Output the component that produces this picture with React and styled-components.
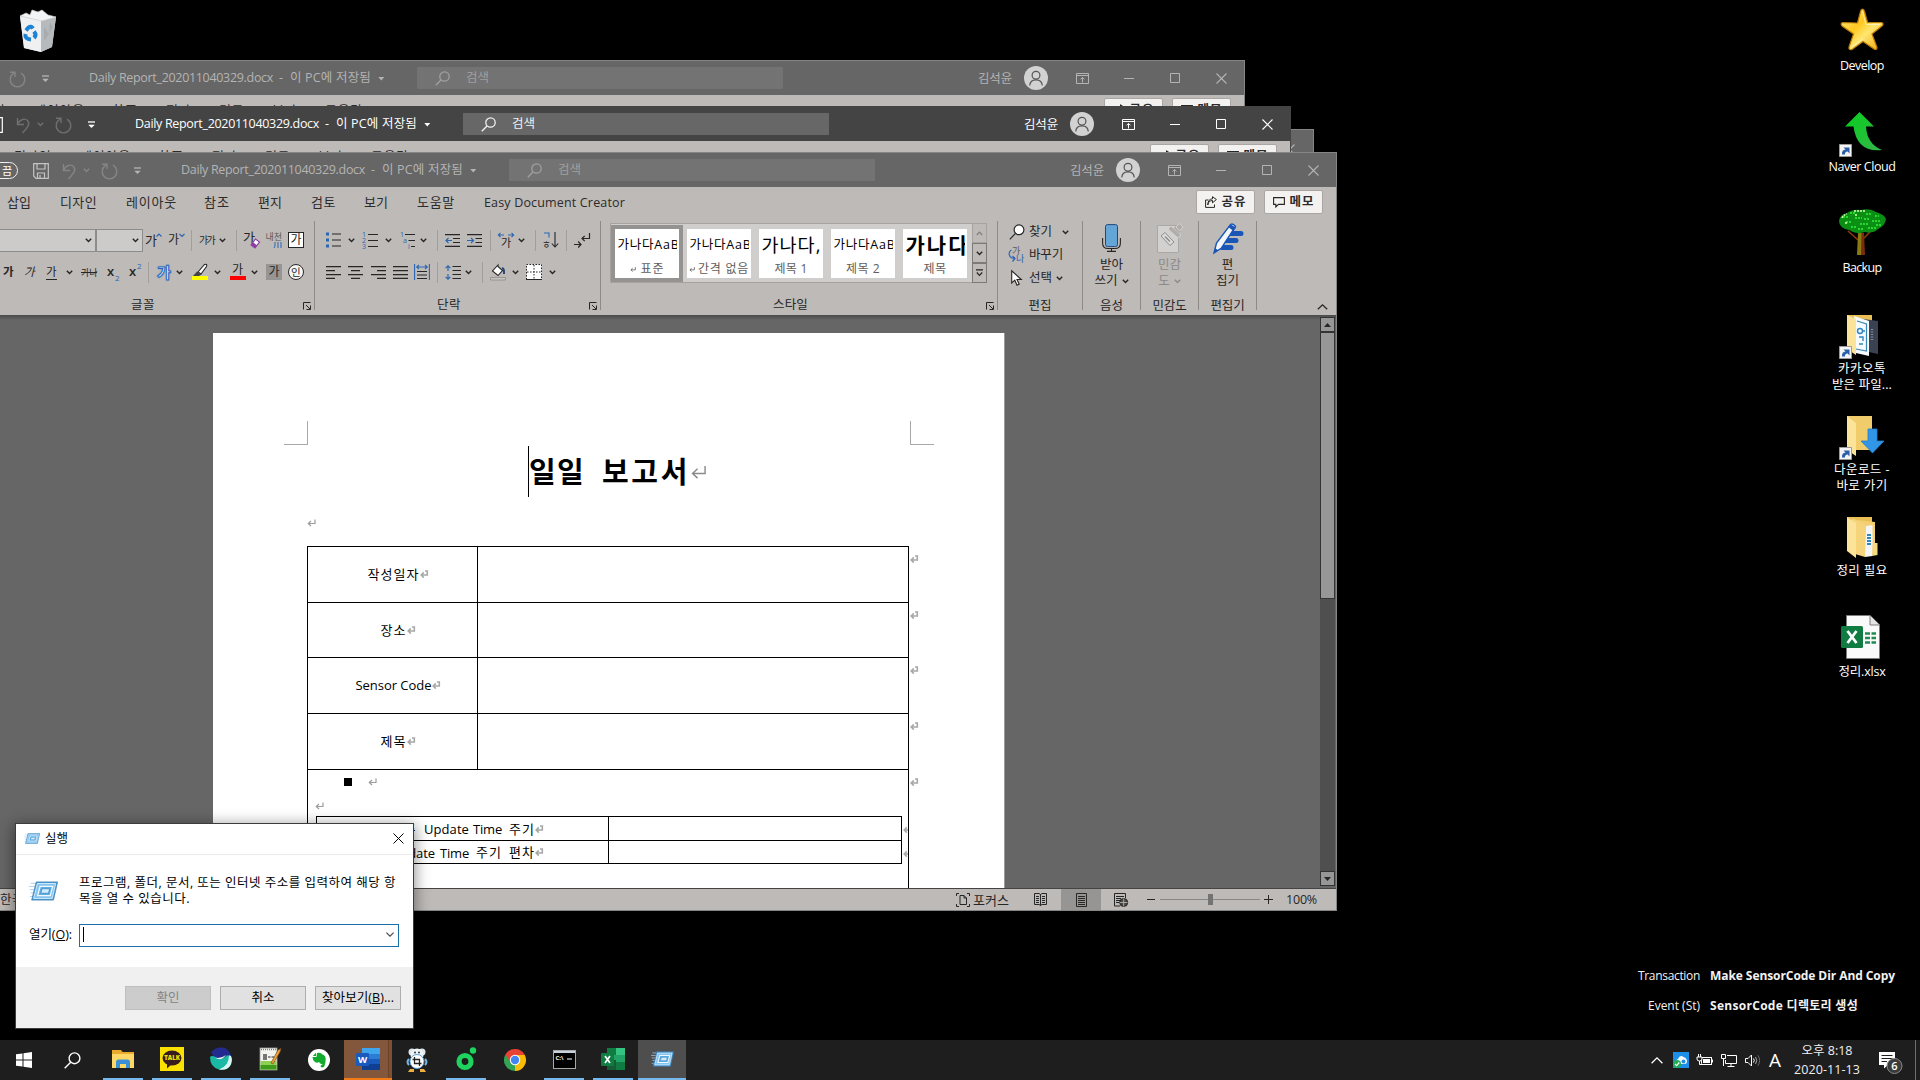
import React, { useLayoutEffect, useRef, useState } from "react";
import styled, { createGlobalStyle, css } from "styled-components";

const Global = createGlobalStyle`
  html, body { margin: 0; padding: 0; background: #000; overflow: hidden; }
  * { box-sizing: border-box; }
  svg { display: block; overflow: visible; flex: none; }
`;

const Desktop = styled.main`
  position: relative;
  width: 1920px;
  height: 1080px;
  overflow: hidden;
  background: #000;
  font-family: "Open Sans", "Noto Sans CJK KR", sans-serif;
  font-size: 12px;
  color: #262626;
`;

/* ---------- text and row helpers ---------- */

const TextBox = styled.span`
  display: block;
  flex: none;
  width: ${(p) => p.$w}px;
  font-size: ${(p) => p.$s || 12}px;
  line-height: ${(p) => p.$lh || 16}px;
  height: ${(p) => p.$lh || 16}px;
  font-weight: ${(p) => p.$b || 400};
  font-style: ${(p) => (p.$i ? "italic" : "normal")};
  color: ${(p) => p.$c || "inherit"};
  white-space: pre;
`;

/* A line of text whose tracking is tuned so that it spans `w` pixels. */
function T({ w, s, b, c, i, lh, children }) {
  const ref = useRef(null);
  const [sp, setSp] = useState(0);
  useLayoutEffect(() => {
    const el = ref.current;
    const n = el.textContent.length;
    const natural = el.getBoundingClientRect().width - sp * n;
    setSp((w - natural) / n);
  }, [w, s]);
  return (
    <TextBox $w={w} $s={s} $b={b} $c={c} $i={i} $lh={lh}>
      <span ref={ref} style={{ letterSpacing: sp }}>{children}</span>
    </TextBox>
  );
}

const StripRow = styled.div`
  display: flex;
  align-items: center;
  flex: none;
  height: ${(p) => p.$h}px;
  margin-top: ${(p) => p.$mt || 0}px;
`;
const Slot = styled.div`
  flex: none;
  display: flex;
  align-items: center;
  width: ${(p) => p.$w}px;
  margin-left: ${(p) => p.$g}px;
  padding-top: ${(p) => p.$pt || 0}px;
`;

/* Items are [start, end, node, topPadding]; gaps follow from neighbouring edges. */
function Strip({ from = 0, h, mt, items }) {
  let x = from;
  return (
    <StripRow $h={h} $mt={mt}>
      {items.map(([a, b, node, pt], k) => {
        const g = a - x;
        x = b;
        return <Slot key={k} $g={g} $w={b - a} $pt={pt}>{node}</Slot>;
      })}
    </StripRow>
  );
}

const Svg = ({ w, h, children, vb, ...r }) => (
  <svg width={w} height={h} viewBox={vb || `0 0 ${w} ${h}`} fill="none" {...r}>{children}</svg>
);
const Chev = ({ c = "#262626" }) => (
  <Svg w={7} h={5}><path d="M.8 .8L3.5 3.6L6.2 .8" stroke={c} strokeWidth="1.4" /></Svg>
);
const Ret = ({ w = 9, h = 8, c = "#9c9c9c" }) => (
  <Svg w={w} h={h} vb="0 0 9 8"><path d="M8 .5V4.5H1.5M4 2L1.3 4.5L4 7" stroke={c} strokeWidth={w > 12 ? 0.75 : 1.2} /></Svg>
);
const CellMark = () => (
  <Svg w={8} h={8}><path d="M5 1H7.3V5H2M3.8 2.4L1.2 5L3.8 7.6" stroke="#a8a8a8" strokeWidth="1.6" /></Svg>
);

/* ---------- Word windows ---------- */

const Win = styled.section`
  position: absolute;
  left: ${(p) => p.$x}px;
  top: ${(p) => p.$y}px;
  width: 1437px;
  height: ${(p) => (p.$front ? 759 : 200)}px;
  display: flex;
  flex-direction: column;
  overflow: hidden;
  background: #bebab7;
  border: 1px solid ${(p) => (p.$active ? "#444" : "#858585")};
  border-left: 0;
`;
const TitleBar = styled.header`
  flex: none;
  height: 34px;
  background: ${(p) => (p.$active ? "#444444" : "#666666")};
  color: ${(p) => (p.$active ? "#fff" : "#b4b4b4")};
`;
const AutoPill = styled.div`
  width: 46px;
  height: 17px;
  border: 1.5px solid #f0f0f0;
  border-radius: 9px;
  display: flex;
  align-items: center;
  justify-content: flex-end;
  padding-right: 4px;
  color: #fff;
`;
const SearchBox = styled.div`
  width: 366px;
  height: 22px;
  background: ${(p) => (p.$active ? "#676767" : "#737373")};
`;
const Avatar = styled.div`
  width: 24px;
  height: 24px;
  border-radius: 50%;
  background: #d2d2d2;
  display: flex;
  justify-content: center;
  align-items: center;
`;

function TitleRow({ active }) {
  const fg = active ? "#ffffff" : "#b4b4b4";
  const dim = active ? "#6f6f6f" : "#858585";
  const ph = active ? "#f2f2f2" : "#a0a0a0";
  return (
    <TitleBar $active={active}>
      <Strip
        h={34}
        from={-100}
        items={[
          [-28, 18, <AutoPill><T w={11} s={11} lh={13}>끔</T></AutoPill>],
          [33, 49, <Svg w={16} h={16}><path d="M.7 .7H15.3V15.3H3L.7 13ZM4 .7V6H12V.7M4.5 15V10H11.5V15M7 12V15" stroke={active ? "#fff" : "#c4c4c4"} strokeWidth="1.2" /></Svg>, 2],
          [62, 77, <Svg w={15} h={17}><path d="M1.5 1V7.5H8M1.5 7.3C4 2 9 1 11.5 3.5C14 6.5 13 9 6.5 16" stroke={dim} strokeWidth="1.4" /></Svg>, 3],
          [83, 90, <Chev c={dim} />],
          [101, 118, <Svg w={17} h={17}><path d="M5 2.2A7.3 7.3 0 1 0 12 2.2M1 1.2H6V6" stroke={dim} strokeWidth="1.4" /></Svg>, 3],
          [134, 141, <Svg w={7} h={8}><path d="M0 1H7" stroke={fg} strokeWidth="1.3" /><path d="M.8 4L3.5 6.7L6.2 4Z" fill={fg} stroke={fg} strokeWidth=".6" /></Svg>, 2],
          [181, 365, <T w={184} s={12.5}>Daily Report_202011040329.docx</T>],
          [371, 376, <T w={5} s={12.5}>-</T>],
          [382, 463, <T w={81} s={12.5}>이 PC에 저장됨</T>],
          [470, 477, <Svg w={7} h={4}><path d="M.3 0H6.3L3.3 3.6Z" fill={fg} /></Svg>, 1],
          [509, 875, (
            <SearchBox $active={active}>
              <Strip h={22} items={[
                [18, 33, <Svg w={15} h={15}><circle cx="9.5" cy="5.5" r="4.7" stroke={ph} strokeWidth="1.3" /><path d="M6 9L.8 14.3" stroke={ph} strokeWidth="1.3" /></Svg>],
                [49, 72, <T w={23} s={12.5} c={ph}>검색</T>],
              ]} />
            </SearchBox>
          )],
          [1070, 1104, <T w={34} s={12.5}>김석윤</T>, 1],
          [1116, 1140, <Avatar><Svg w={16} h={18}><circle cx="8" cy="6.2" r="3.9" stroke="#555" strokeWidth="1.2" /><path d="M1.7 16.5C2 12.5 4 10.8 8 10.8S14 12.5 14.3 16.5" stroke="#555" strokeWidth="1.2" /></Svg></Avatar>],
          [1168, 1181, <Svg w={13} h={11}><path d="M.5 .5H12.5V10.5H.5ZM.5 2.5H12.5M6.5 9.5V4.6M4.5 6.4L6.5 4.4L8.5 6.4" stroke={fg} /></Svg>],
          [1216, 1226, <Svg w={10} h={1}><path d="M0 .5H10" stroke={fg} /></Svg>],
          [1262, 1272, <Svg w={10} h={10}><path d="M.5 .5H9.5V9.5H.5Z" stroke={fg} /></Svg>],
          [1308, 1319, <Svg w={11} h={11}><path d="M.5 .5L10.5 10.5M10.5 .5L.5 10.5" stroke={fg} strokeWidth="1.1" /></Svg>],
        ]}
      />
    </TitleBar>
  );
}

const TabBar = styled.nav`
  flex: none;
  height: 34px;
  display: flex;
  color: #2b2b2b;
`;
const TabBtn = styled.div`
  width: 59px;
  height: 24px;
  background: #f3f2f1;
  border: 1px solid #a9a6a3;
  border-radius: 2px;
  display: flex;
  align-items: center;
  justify-content: center;
  gap: 5px;
`;

function Tabs() {
  return (
    <TabBar>
      <Strip
        from={-100}
        h={29}
        items={[
          [7, 31, <T w={24} s={13}>삽입</T>],
          [60, 97, <T w={37} s={13}>디자인</T>],
          [126, 177, <T w={51} s={13}>레이아웃</T>],
          [204, 230, <T w={26} s={13}>참조</T>],
          [258, 282, <T w={24} s={13}>편지</T>],
          [311, 336, <T w={25} s={13}>검토</T>],
          [364, 388, <T w={24} s={13}>보기</T>],
          [417, 455, <T w={38} s={13}>도움말</T>],
          [484, 625, <T w={141} s={12.5}>Easy Document Creator</T>, 3],
          [1196, 1255, <TabBtn><Svg w={12} h={12}><path d="M3.5 4H.6V11.4H9.5V8.5M2.8 9C3 6 5 4.5 7.5 4.5V6.8L11.4 3.5L7.5 .7V2.8C4.5 3 2.8 5 2.8 9Z" stroke="#262626" /></Svg><T w={25} s={12.5} b={700}>공유</T></TabBtn>, 1],
          [1264, 1323, <TabBtn><Svg w={12} h={11}><path d="M.6 .6H11.4V7.4H5.5L2.8 10V7.4H.6Z" stroke="#262626" strokeWidth="1.1" /></Svg><T w={25} s={12.5} b={700}>메모</T></TabBtn>, 1],
        ]}
      />
    </TabBar>
  );
}

/* ---------- ribbon ---------- */

const RibbonBar = styled.div`
  flex: none;
  display: flex;
  height: 94px;
  color: #262626;
`;
const Group = styled.div`
  flex: none;
  display: flex;
  flex-direction: column;
  width: ${(p) => p.$w}px;
  height: 89px;
  border-right: 1px solid #8d8a88;
`;
const Sep = styled.i`
  display: block;
  width: 1px;
  height: 21px;
  background: #a19e9b;
`;
const Combo = styled.div`
  width: ${(p) => p.$w}px;
  height: 23px;
  border: 1px solid #8e8c8a;
  background: #cdcbc9;
  display: flex;
  align-items: center;
  justify-content: flex-end;
  padding-right: 3px;
`;
const GlyphBox = styled.div`
  width: 16px;
  height: 16px;
  display: flex;
  align-items: center;
  justify-content: center;
  ${(p) => p.$kind === "box" && css`background: #fff; border: 1px solid #262626;`}
  ${(p) => p.$kind === "shade" && css`background: #979593;`}
  ${(p) => p.$kind === "circle" && css`background: #f6f6f6; border: 1px solid #262626; border-radius: 50%;`}
`;
const Deco = styled.div`
  display: flex;
  ${(p) => p.$k === "u" && css`border-bottom: 1px solid #262626;`}
  ${(p) => p.$k === "glow" && css`color: #fff; -webkit-text-stroke: 1px #2467bd; text-shadow: 0 0 2px #2467bd;`}
`;
const Stack = styled.div`
  display: flex;
  flex-direction: column;
  align-items: center;
  width: 100%;
`;
const ColorBar = styled.i`
  display: block;
  width: 16px;
  height: 4px;
  background: ${(p) => p.$c};
`;
const B = "#2a66b1";
const Lines = ({ d }) => <Svg w={15} h={13}><path d={d} stroke="#262626" strokeWidth="1.1" /></Svg>;
const Launch = () => <Svg w={8} h={8}><path d="M7.5 .5H.5V7.5M3 3L7 7M7.5 3.5V7.5H3.5" stroke="#262626" /></Svg>;
const GrowA = ({ up }) => (
  <StripRow $h={16}>
    <T w={11} s={up ? 13 : 12}>가</T>
    <Svg w={6} h={14}><path d={up ? "M.5 3.5L3 1L5.5 3.5" : "M.5 1L3 3.5L5.5 1"} stroke={B} strokeWidth="1.2" /></Svg>
  </StripRow>
);

function FontGroup() {
  return (
    <Group $w={415}>
      <Strip from={-100} h={30} mt={4} items={[
        [-100, 96, <Combo $w={196}><Chev /></Combo>],
        [96, 143, <Combo $w={47}><Chev /></Combo>],
        [145, 162, <GrowA up />],
        [168, 185, <GrowA />],
        [191, 192, <Sep />],
        [199, 214, <T w={15} s={10}>가가</T>],
        [219, 226, <Chev />],
        [236, 237, <Sep />],
        [244, 260, <Svg w={16} h={18}><text x="-1" y="11" fontSize="13" fill="#262626">가</text><path d="M7 14L11.5 8L15.5 11L11 17Z" fill="#fff" stroke="#8e3ba5" strokeWidth="1.2" /><path d="M7 14L9 11.3L13 14.2L11 17Z" fill="#8e3ba5" /></Svg>],
        [266, 282, <Svg w={16} h={18}><text x="-.5" y="9" fontSize="9" fill="#5c5a58">내천</text><path d="M9 11V14Q9 16 8 17M12 11V17M15 11V17" stroke={B} /></Svg>],
        [288, 304, <GlyphBox $kind="box"><T w={11} s={12} lh={14}>가</T></GlyphBox>],
      ]} />
      <Strip from={-100} h={30} mt={2} items={[
        [3, 14, <T w={10} s={11.5} b={700}>가</T>],
        [24, 35, <T w={11} s={11.5} i>가</T>],
        [46, 57, <Deco $k="u"><T w={11} s={11.5} lh={15}>가</T></Deco>],
        [66, 73, <Chev />],
        [81, 97, <Svg w={16} h={14}><text x="0" y="11" fontSize="9" fill="#262626">가나</text><path d="M0 7.5H16" stroke="#262626" /></Svg>],
        [107, 119, <Svg w={12} h={16}><text x="0" y="12" fontSize="13" fontWeight="600" fill="#262626">x</text><text x="8" y="17" fontSize="8" fill={B}>2</text></Svg>],
        [129, 141, <Svg w={12} h={16}><text x="0" y="12" fontSize="13" fontWeight="600" fill="#262626">x</text><text x="8" y="5" fontSize="8" fill={B}>2</text></Svg>],
        [148, 149, <Sep />],
        [157, 173, <Deco $k="glow"><T w={15} s={15} b={700}>가</T></Deco>],
        [176, 183, <Chev />],
        [192, 208, <Stack><Svg w={16} h={12}><path d="M6 8L12.5 .5Q15.5 -.5 14.5 2.5L9 10Z" fill="#fff" stroke="#262626" strokeWidth="1.1" /><path d="M1 12L5 7.5L9.5 10.5L7 12Z" fill="#444" /></Svg><ColorBar $c="#ffff00" /></Stack>],
        [214, 221, <Chev />],
        [229, 246, <Stack><T w={11} s={12} lh={12}>가</T><ColorBar $c="#ff0000" /></Stack>],
        [251, 258, <Chev />],
        [266, 282, <GlyphBox $kind="shade"><T w={11} s={12} lh={14}>가</T></GlyphBox>],
        [288, 304, <GlyphBox $kind="circle"><T w={10} s={10.5} lh={13}>인</T></GlyphBox>],
      ]} />
      <Strip from={-100} h={16} mt={10} items={[
        [131, 155, <T w={24} s={12.5}>글꼴</T>],
        [303, 311, <Launch />, 1],
      ]} />
    </Group>
  );
}

function ParaGroup() {
  return (
    <Group $w={286}>
      <Strip from={315} h={30} mt={4} items={[
        [326, 341, <Svg w={15} h={16}><path d="M0 2H3M0 8H3M0 14H3" stroke={B} strokeWidth="3" /><path d="M6 2H15M6 8H15M6 14H15" stroke="#262626" strokeWidth="1.1" /></Svg>],
        [348, 355, <Chev />],
        [362, 378, <Svg w={16} h={17}><text x="0" y="5" fontSize="7" fill={B}>1</text><text x="0" y="11" fontSize="7" fill={B}>2</text><text x="0" y="17" fontSize="7" fill={B}>3</text><path d="M6 2.5H16M6 8.5H16M6 14.5H16" stroke="#262626" strokeWidth="1.1" /></Svg>],
        [385, 392, <Chev />],
        [400, 415, <Svg w={15} h={17}><text x="0" y="5" fontSize="7" fill={B}>1</text><text x="3" y="11" fontSize="7" fill={B}>a</text><text x="8" y="17" fontSize="7" fill={B}>i</text><path d="M5 2.5H15M8.5 8.5H15M11 14.5H15" stroke="#262626" strokeWidth="1.1" /></Svg>],
        [420, 427, <Chev />],
        [437, 438, <Sep />],
        [445, 460, <Svg w={15} h={13}><path d="M0 .6H15M8 4.5H15M8 8.5H15M0 12.4H15" stroke="#262626" strokeWidth="1.1" /><path d="M7 6.5H1M3.5 4L1 6.5L3.500 9" stroke={B} strokeWidth="1.2" /></Svg>],
        [467, 482, <Svg w={15} h={13}><path d="M0 .6H15M8.5 4.5H15M8.5 8.5H15M0 12.4H15" stroke="#262626" strokeWidth="1.1" /><path d="M0 6.5H6.5M4 4L6.5 6.5L4 9" stroke={B} strokeWidth="1.2" /></Svg>],
        [490, 491, <Sep />],
        [498, 515, <Svg w={17} h={16}><path d="M0 3H6M2.5 .8L.3 3L2.5 5.2M10 3H16M13.5 .8L15.7 3L13.5 5.2" stroke={B} strokeWidth="1.1" /><text x="3" y="15" fontSize="11" fill="#262626">가</text></Svg>],
        [518, 525, <Chev />],
        [535, 536, <Sep />],
        [542, 559, <Svg w={17} h={16}><path d="M2 1H7V5.5" stroke={B} strokeWidth="1.1" /><text x="0" y="15.5" fontSize="9.5" fill="#262626">ㅎ</text><path d="M13 0V15M9.8 11.5L13 15L16.2 11.5" stroke="#262626" strokeWidth="1.1" /></Svg>],
        [566, 567, <Sep />],
        [574, 590, <Svg w={16} h={15}><path d="M15.5 0V5.5H8M10.7 2.8L8 5.5L10.7 8.2M0 11.5H7M4.2 8.5L7 11.5L4.2 14.5" stroke="#262626" strokeWidth="1.2" /></Svg>],
      ]} />
      <Strip from={315} h={30} mt={2} items={[
        [326, 341, <Lines d="M0 .6H15M0 4.6H9M0 8.6H15M0 12.4H9" />],
        [348, 363, <Lines d="M0 .6H15M3 4.6H12M0 8.6H15M3 12.4H12" />],
        [371, 386, <Lines d="M0 .6H15M6 4.6H15M0 8.6H15M6 12.4H15" />],
        [393, 408, <Lines d="M0 .6H15M0 4.6H15M0 8.6H15M0 12.4H15" />],
        [414, 430, <Svg w={16} h={16}><path d="M.6 0V16M15.4 0V16M2.5 3H13.5M5 1L2.7 3L5 5M11 1L13.3 3L11 5" stroke={B} strokeWidth="1.1" /><path d="M3 7.5H13M3 11H13M3 14.5H13" stroke="#262626" strokeWidth="1.1" /></Svg>],
        [437, 438, <Sep />],
        [445, 461, <Svg w={16} h={15}><path d="M3 1V6M3 9V14M.6 3.2L3 .8L5.4 3.2M.6 11.8L3 14.2L5.4 11.8" stroke={B} strokeWidth="1.2" /><path d="M7.5 1.5H16M7.5 5.5H16M7.5 9.5H16M7.5 13.5H16" stroke="#262626" strokeWidth="1.1" /></Svg>],
        [465, 472, <Chev />],
        [482, 483, <Sep />],
        [490, 506, <Svg w={16} h={16}><path d="M8 1L2.5 7L8 11.5L12.5 6.5L8 2.5Z" fill="#fff" stroke="#262626" strokeWidth="1.1" /><path d="M12 4Q14.5 4.5 14 10" stroke="#24477a" strokeWidth="2" /><path d="M.5 13.5H15.5V16H.5Z" fill="#c8c6c4" stroke="#8d8a88" strokeWidth=".8" /></Svg>],
        [512, 519, <Chev />],
        [526, 542, <Svg w={16} h={16}><path d="M.5 .5H15.5V15.5H.5Z" fill="#fff" stroke="#262626" strokeDasharray="1.5 1.5" /><path d="M8 1V15M1 8H15" stroke="#262626" strokeDasharray="1.5 1.5" /><path d="M0 15.5H16" stroke="#262626" /></Svg>],
        [549, 556, <Chev />],
      ]} />
      <Strip from={315} h={16} mt={10} items={[
        [437, 461, <T w={24} s={12.5}>단락</T>],
        [589, 597, <Launch />, 1],
      ]} />
    </Group>
  );
}

const Gallery = styled.div`
  display: flex;
  flex: none;
  width: 377px;
  height: 60px;
  margin: 2px 0 0 9px;
  border: 1px solid #a5a2a0;
  background: #d0cecc;
`;
const Card = styled.div`
  flex: none;
  width: 72px;
  height: 57px;
  margin-top: 1px;
  border: 4px solid ${(p) => (p.$on ? "#959391" : "transparent")};
`;
const CardFace = styled.div`
  height: 49px;
  width: 64px;
  background: #fff;
  overflow: hidden;
  display: flex;
  flex-direction: column;
  align-items: center;
  padding-top: 3px;
`;
const CardSample = styled.div`
  height: 26px;
  width: 59px;
  overflow: hidden;
  display: flex;
  align-items: center;
  color: #000;
`;
const ScrollCol = styled.div`
  width: 15px;
  margin: -1px -1px -1px auto;
  display: flex;
  flex-direction: column;
`;
const ScrollBtn = styled.div`
  flex: 1;
  border: 1px solid ${(p) => (p.$off ? "#a5a2a0" : "#7d7b79")};
  background: #bebab7;
  display: flex;
  align-items: center;
  justify-content: center;
`;

const styleCards = [
  { s: <T w={62} s={12.5}>가나다AaB</T>, l: <T w={24} s={12}>표준</T>, m: true },
  { s: <T w={62} s={12.5}>가나다AaB</T>, l: <T w={51} s={12}>간격 없음</T>, m: true },
  { s: <T w={60} s={18.5} lh={24}>가나다,</T>, l: <T w={33} s={12}>제목 1</T> },
  { s: <T w={62} s={12.5}>가나다AaB</T>, l: <T w={34} s={12}>제목 2</T> },
  { s: <T w={64} s={21} b={700} lh={26}>가나다</T>, l: <T w={23} s={12}>제목</T> },
];
const CardLabel = styled.div`
  display: flex;
  align-items: center;
  gap: ${(p) => (p.$tight ? 3 : 5)}px;
  height: 18px;
  color: #605e5c;
  margin-top: 2px;
`;

function StyleGroup() {
  return (
    <Group $w={397}>
      <Gallery>
        {styleCards.map((c, k) => (
          <Card key={k} $on={k === 0}>
            <CardFace>
              <CardSample>{c.s}</CardSample>
              <CardLabel $tight={k === 1}>{c.m && <Ret w={6} h={7} c="#605e5c" />}{c.l}</CardLabel>
            </CardFace>
          </Card>
        ))}
        <ScrollCol>
          <ScrollBtn $off><Svg w={7} h={5}><path d="M.8 4L3.5 1.2L6.2 4" stroke="#807e7c" strokeWidth="1.2" /></Svg></ScrollBtn>
          <ScrollBtn><Chev /></ScrollBtn>
          <ScrollBtn><Svg w={7} h={8}><path d="M0 .8H7M.8 3.5L3.5 6.3L6.2 3.5" stroke="#262626" strokeWidth="1.2" /></Svg></ScrollBtn>
        </ScrollCol>
      </Gallery>
      <Strip from={601} h={16} mt={14} items={[
        [773, 808, <T w={35} s={12.5}>스타일</T>],
        [986, 994, <Launch />, 1],
      ]} />
    </Group>
  );
}

const BigIcon = styled.div`
  height: 34px;
  display: flex;
  align-items: center;
  justify-content: center;
`;
const BigText = styled.div`
  display: flex;
  justify-content: center;
  align-items: center;
  gap: 4px;
  height: 16px;
  margin-top: ${(p) => p.$mt || 0}px;
`;
const BigWrap = styled.div`
  display: flex;
  flex-direction: column;
  color: ${(p) => (p.$off ? "#8c8987" : "#262626")};
`;
const GroupName = styled.div`
  display: flex;
  justify-content: center;
  margin-top: ${(p) => p.$mt}px;
  color: #262626;
`;

function BigGroup({ w, icon, a, b, drop, off, name, nw }) {
  return (
    <Group $w={w}>
      <BigWrap $off={off}>
        <BigIcon>{icon}</BigIcon>
        <BigText $mt={2}><T w={a.length * 11.5} s={12.5}>{a}</T></BigText>
        <BigText><T w={b.length * 11.5} s={12.5}>{b}</T>{drop && <Chev c={off ? "#8c8987" : "#262626"} />}</BigText>
      </BigWrap>
      <GroupName $mt={9}><T w={nw} s={12.5}>{name}</T></GroupName>
    </Group>
  );
}

function Ribbon() {
  return (
    <RibbonBar>
      <FontGroup />
      <ParaGroup />
      <StyleGroup />
      <Group $w={85}>
        <Strip from={998} h={22} items={[
          [1009, 1025, <Svg w={16} h={16}><circle cx="10" cy="5.8" r="4.9" fill="#fff" stroke="#262626" strokeWidth="1.2" /><path d="M6.5 9.3L.8 15.3" stroke="#262626" strokeWidth="1.2" /></Svg>],
          [1029, 1052, <T w={23} s={12.5}>찾기</T>],
          [1062, 1069, <Chev />],
        ]} />
        <Strip from={998} h={24} items={[
          [1008, 1024, <Svg w={16} h={16}><text x="4" y="7" fontSize="9" fill="#5c5a58">가</text><text x="8" y="15" fontSize="9" fill={B}>나</text><path d="M3.5 3C0 5 0 11 7 11.5M4.5 9L7 11.5L4.5 14.5" stroke={B} strokeWidth="1.2" /></Svg>],
          [1029, 1063, <T w={34} s={12.5}>바꾸기</T>],
        ]} />
        <Strip from={998} h={22} items={[
          [1011, 1022, <Svg w={11} h={16}><path d="M.7 .8V13L3.8 10.2L6 15.2L8.2 14.2L6 9.5H10.3Z" fill="#fff" stroke="#262626" strokeWidth="1.1" /></Svg>],
          [1029, 1052, <T w={23} s={12.5}>선택</T>],
          [1056, 1063, <Chev />],
        ]} />
        <GroupName $mt={9}><T w={23} s={12.5}>편집</T></GroupName>
      </Group>
      <BigGroup w={58} name="음성" nw={23} a="받아" b="쓰기" drop icon={
        <Svg w={19} h={28}><rect x="3.5" y=".6" width="12" height="22" rx="2" fill="#64a5d8" stroke="#24477a" /><path d="M.6 14V19Q.6 24.5 6 24.5H13Q18.4 24.5 18.4 19V14M9.5 24.5V27.4M5 27.4H14" stroke="#262626" strokeWidth="1.1" /></Svg>
      } />
      <BigGroup w={58} off name="민감도" nw={34} a="민감" b="도" drop icon={
        <Svg w={26} h={30}><path d="M.5 2.5H21.5V29.5H.5Z" fill="#d3d1cf" stroke="#aaa8a6" /><path d="M4 13L8 9.500L17 19L13 22.500Z" fill="#dddbd9" stroke="#8f8d8b" /><path d="M8 13.500L13 18.500" stroke="#8f8d8b" strokeWidth="1.5" /><path d="M11 6L14 3L24 12L21 15Z" fill="#b0adab" stroke="#d3d1cf" /><path d="M16.500 5L19.500 2L24.500 7L21.500 10Z" fill="#b0adab" /><path d="M19 4L22.500 .5L26 4L22.500 8Z" fill="#b0adab" stroke="#d3d1cf" /></Svg>
      } />
      <BigGroup w={58} name="편집기" nw={34} a="편" b="집기" icon={
        <Svg w={30} h={31}><path d="M15 10.5H28M12 17.5H23M9 24.5H18" stroke="#1a56b8" strokeWidth="5" strokeLinecap="round" /><path d="M1 30L3.5 20L17.5 1.5Q20 0 22.5 3.5L8.5 25Z" fill="#f2f6fb" stroke="#1a56b8" strokeWidth="1.4" /><path d="M17.5 1.2L23 4.8L20.5 8L15.5 4.3Z" fill="#1a56b8" /><path d="M1 30L2 25L5.5 27.5Z" fill="#1a56b8" /></Svg>
      } />
      <Strip from={1257} h={16} mt={78} items={[
        [1317, 1328, <Svg w={11} h={6}><path d="M.8 5.3L5.5 .8L10.2 5.3" stroke="#262626" strokeWidth="1.3" /></Svg>],
      ]} />
    </RibbonBar>
  );
}

/* ---------- document ---------- */

const Canvas = styled.div`
  flex: none;
  height: 574px;
  padding-left: 313px;
  display: flex;
  background: linear-gradient(#4a4a4a, #666 5px);
  overflow: hidden;
  border-bottom: 1px solid #444;
`;
const Page = styled.article`
  flex: none;
  width: 792px;
  height: 900px;
  margin-top: 18px;
  background: #fff;
  border-right: 1px solid #9a9a9a;
  color: #000;
`;
const Corner = styled.i`
  display: block;
  width: 24px;
  height: 24px;
  border-bottom: 1px solid #a8a8a8;
  ${(p) => (p.$r ? "border-left: 1px solid #a8a8a8;" : "border-right: 1px solid #a8a8a8;")}
`;
const Caret = styled.i`
  display: block;
  width: 1px;
  height: ${(p) => p.$h}px;
  background: #000;
`;
const DocRow = styled.div`
  display: flex;
  height: ${(p) => p.$h}px;
  margin-left: 94px;
`;
const LabelCell = styled.div`
  width: 170px;
  border: 1px solid #000;
  border-width: 1px 0 0 1px;
  display: flex;
  align-items: center;
  justify-content: center;
  padding: 0 0 1px 10px;
`;
const ValueCell = styled.div`
  width: 432px;
  border: 1px solid #000;
  border-width: 1px 1px 0 1px;
`;
const EndMark = styled.div`
  padding: 9px 0 0 1px;
`;
const BodyCell = styled.div`
  width: 602px;
  height: 200px;
  border: 1px solid #000;
  padding-left: 8px;
`;
const InnerRow = styled.div`
  display: flex;
  height: ${(p) => p.$h}px;
  width: 592px;
  overflow: hidden;
`;
const InnerCell = styled.div`
  flex: none;
  width: ${(p) => p.$w}px;
  border: 1px solid #000;
  border-width: 1px ${(p) => (p.$last ? 1 : 0)}px ${(p) => (p.$bottom ? 1 : 0)}px 1px;
  display: flex;
  align-items: center;
  padding-left: 74px;
`;
const Square = styled.i`
  display: block;
  width: 8px;
  height: 8px;
  background: #000;
`;
const VScroll = styled.div`
  flex: none;
  width: 15px;
  height: 569px;
  margin: 2px 0 0 315px;
  background: #4f4f4f;
  display: flex;
  flex-direction: column;
`;
const VPart = styled.div`
  flex: none;
  height: ${(p) => p.$h}px;
  margin-top: ${(p) => p.$mt || 0}px;
  border: 1px solid #333;
  background: #979797;
  display: flex;
  align-items: center;
  justify-content: center;
`;

const rows = [["작성일자", 52, 56], ["장소", 26, 55], ["Sensor Code", 76, 56], ["제목", 26, 56]];

function Doc() {
  return (
    <Canvas>
      <Page>
        <Strip from={213} h={24} mt={88} items={[[284, 308, <Corner />], [910, 934, <Corner $r />]]} />
        <Strip from={213} h={52} mt={0} items={[
          [528, 529, <Caret $h={51} />],
          [529, 585, <T w={56} s={29} b={700} lh={40}>일일</T>, 1],
          [602, 690, <T w={88} s={29} b={700} lh={40}>보고서</T>, 1],
          [690, 708, <Ret w={17} h={15} c="#8a8a8a" />, 2],
        ]} />
        <Strip from={213} h={16} mt={18} items={[[307, 316, <Ret />]]} />
        <StripRow $h={15} />
        {rows.map(([label, w, h]) => (
          <DocRow key={label} $h={h}>
            <LabelCell><T w={w} s={13}>{label}</T><CellMark /></LabelCell>
            <ValueCell />
            <EndMark><CellMark /></EndMark>
          </DocRow>
        ))}
        <DocRow $h={200}>
          <BodyCell>
            <Strip from={316} h={24} items={[[344, 352, <Square />], [368, 377, <Ret />]]} />
            <Strip from={316} h={22} items={[[315, 324, <Ret />, 1]]} />
            <InnerRow $h={24}>
              <InnerCell $w={292}>
                <Strip from={391} h={16} items={[[391, 416, <T w={25} s={13}>기준</T>], [424, 469, <T w={45} s={13}>Update</T>], [473, 502, <T w={29} s={13}>Time</T>], [509, 535, <T w={26} s={13}>주기</T>], [535, 543, <CellMark />]]} />
              </InnerCell>
              <InnerCell $w={294} $last />
              <EndMark><CellMark /></EndMark>
            </InnerRow>
            <InnerRow $h={24}>
              <InnerCell $w={292} $bottom>
                <Strip from={391} h={16} items={[[391, 435, <T w={44} s={13}>Update</T>, 1], [440, 469, <T w={29} s={13}>Time</T>, 1], [476, 502, <T w={26} s={13}>주기</T>], [509, 535, <T w={26} s={13}>편차</T>], [535, 543, <CellMark />]]} />
              </InnerCell>
              <InnerCell $w={294} $last $bottom />
              <EndMark><CellMark /></EndMark>
            </InnerRow>
          </BodyCell>
          <EndMark><CellMark /></EndMark>
        </DocRow>
      </Page>
      <VScroll>
        <VPart $h={15}><Svg w={7} h={4}><path d="M0 4L3.5 0L7 4Z" fill="#262626" /></Svg></VPart>
        <VPart $h={267} />
        <VPart $h={15} $mt={272}><Svg w={7} h={4}><path d="M0 0L3.5 4L7 0Z" fill="#262626" /></Svg></VPart>
      </VScroll>
    </Canvas>
  );
}

const StatusBar = styled.footer`
  flex: 1;
  display: flex;
  color: #262626;
`;
const ViewBtn = styled.div`
  width: 40px;
  height: 22px;
  background: #979593;
  display: flex;
  align-items: center;
  justify-content: center;
`;
const Thumb = styled.i`
  display: block;
  width: 5px;
  height: 11px;
  background: #757371;
`;
const Rail = styled.i`
  display: block;
  width: 100%;
  height: 1px;
  background: #8a8886;
`;

function Status() {
  return (
    <StatusBar>
      <Strip from={-100} h={21} items={[
        [0, 35, <T w={35} s={12.5}>한국어</T>],
        [956, 970, <Svg w={14} h={14}><path d="M3 .5H.5V3M11 .5H13.5V3M.5 11V13.5H3M13.5 11V13.5H11M4 2.5H8L10.5 5V11.5H4ZM8 2.5V5H10.5" stroke="#262626" /></Svg>],
        [973, 1009, <T w={36} s={13}>포커스</T>],
        [1034, 1047, <Svg w={13} h={13}><path d="M6.5 1.5L5 .5H.5V11.5H5L6.5 12.5L8 11.5H12.5V.5H8ZM6.5 1.5V12.5M2 3.5H5M2 5.5H5M2 7.5H5M2 9.5H5M8 3.5H11M8 5.5H11M8 7.5H11M8 9.5H11" stroke="#262626" /></Svg>],
        [1061, 1101, <ViewBtn><Svg w={11} h={14}><path d="M.5 .5H10.5V13.5H.5ZM2 3.5H9M2 5.5H9M2 7.5H9M2 9.5H9M2 11.5H9" stroke="#262626" /></Svg></ViewBtn>],
        [1114, 1128, <Svg w={14} h={14}><path d="M6 13H.5V.5H11.5V5M2 3.5H10M2 5.5H7M2 7.5H6M2 9.5H5" stroke="#262626" /><circle cx="9.7" cy="9.5" r="4" fill="#4a4846" stroke="#262626" /><path d="M6 9.5H13.5M9.7 5.5V13.5" stroke="#bebab7" strokeWidth=".8" /></Svg>],
        [1147, 1155, <Svg w={8} h={1}><path d="M0 .5H8" stroke="#262626" /></Svg>],
        [1160, 1208, <Rail />],
        [1208, 1213, <Thumb />],
        [1213, 1260, <Rail />],
        [1264, 1273, <Svg w={9} h={9}><path d="M0 4.5H9M4.500 0V9" stroke="#262626" /></Svg>],
        [1286, 1317, <T w={31} s={12.5}>100%</T>],
      ]} />
    </StatusBar>
  );
}

function WordWindow({ x, y, active, front }) {
  return (
    <Win $x={x} $y={y} $active={active} $front={front}>
      <TitleRow active={active} />
      <Tabs />
      {front && <Ribbon />}
      {front && <Doc />}
      {front && <Status />}
    </Win>
  );
}

/* Only a corner of this window's caption shows between its neighbours. */
const Sliver = styled(Win)`
  align-items: flex-end;
  background: #666;
  padding: 14px 18px 0 0;
`;

/* ---------- Run dialog ---------- */

const Dialog = styled.section`
  position: absolute;
  left: 15px;
  top: 823px;
  width: 399px;
  height: 206px;
  display: flex;
  flex-direction: column;
  background: #fff;
  border: 1px solid #3c3c3c;
  color: #000;
  box-shadow: 0 3px 14px 1px rgba(0, 0, 0, 0.45);
`;
const DlgTitle = styled.header`
  height: 31px;
  border-bottom: 1px solid #ececec;
`;
const DlgFoot = styled.footer`
  margin-top: auto;
  height: 61px;
  background: #f0f0f0;
  padding: 19px 12px 0 0;
  display: flex;
  justify-content: flex-end;
  gap: 9px;
`;
const DlgBtn = styled.button`
  width: 86px;
  height: 24px;
  padding: 0;
  display: flex;
  align-items: center;
  justify-content: center;
  font-family: inherit;
  background: ${(p) => (p.disabled ? "#cccccc" : "#e1e1e1")};
  border: 1px solid ${(p) => (p.disabled ? "#bfbfbf" : "#adadad")};
  color: ${(p) => (p.disabled ? "#838383" : "#000")};
`;
const Field = styled.div`
  width: 320px;
  height: 23px;
  border: 1px solid #1a6fa8;
  display: flex;
  align-items: center;
  justify-content: space-between;
  padding: 0 4px 2px 3px;
`;
const U = styled.u`
  text-underline-offset: 1px;
`;
const Lead = styled.div`
  display: flex;
  flex-direction: column;
`;

const RunIcon = ({ w, h }) => (
  <Svg w={w} h={h} vb="0 0 32 22">
    <path d="M2 2.500H9M0 6H8M1 9.500H7M2 13H6M1 17H5" stroke="#a9d0ee" strokeWidth="1" />
    <path d="M8 1H31.500L27 21H3Z" fill="#4b9bd6" stroke="#3b7fb5" strokeWidth=".8" />
    <path d="M9.300 2.800H29.300L25.600 19.200H5.200Z" fill="#86c3ee" stroke="#d8effd" strokeWidth="1" />
    <path d="M12.300 6H26L23.500 16H9.500Z" fill="#5fafe4" stroke="#eef8ff" strokeWidth="1.400" />
    <path d="M14.500 8.500H22.800L21.500 13.500H13Z" fill="#d2ebfb" stroke="#3f8cc6" strokeWidth=".9" />
  </Svg>
);

function RunDialog() {
  return (
    <Dialog>
      <DlgTitle>
        <Strip from={16} h={28} items={[
          [24, 40, <RunIcon w={16} h={11} />],
          [45, 68, <T w={23} s={12.5}>실행</T>, 2],
          [393, 404, <Svg w={11} h={11}><path d="M.5 .5L10.5 10.5M10.5 .5L.5 10.5" stroke="#000" /></Svg>],
        ]} />
      </DlgTitle>
      <Strip from={16} h={34} mt={18} items={[
        [28, 60, <RunIcon w={31} h={20} />, 2],
        [79, 396, (
          <Lead>
            <T w={317} s={12.5}>프로그램, 폴더, 문서, 또는 인터넷 주소를 입력하여 해당 항</T>
            <T w={111} s={12.5}>목을 열 수 있습니다.</T>
          </Lead>
        ), 1],
      ]} />
      <Strip from={16} h={24} mt={16} items={[
        [29, 72, <T w={43} s={12.5}>열기(<U>O</U>):</T>],
        [79, 399, <Field><Caret $h={15} /><Svg w={8} h={5}><path d="M.4 .6L4 4.2L7.6 .6" stroke="#444" strokeWidth="1.1" /></Svg></Field>],
      ]} />
      <DlgFoot>
        <DlgBtn disabled><T w={23} s={12.5}>확인</T></DlgBtn>
        <DlgBtn><T w={23} s={12.5}>취소</T></DlgBtn>
        <DlgBtn><T w={72} s={12.5}>찾아보기(<U>B</U>)...</T></DlgBtn>
      </DlgFoot>
    </Dialog>
  );
}

/* ---------- desktop shortcuts ---------- */

const IconColumn = styled.div`
  position: absolute;
  left: 1812px;
  top: 7px;
  width: 100px;
  display: flex;
  flex-direction: column;
  color: #fff;
`;
const Shortcut = styled.div`
  height: 101px;
  display: flex;
  flex-direction: column;
  align-items: center;
`;
const Pic = styled.div`
  height: 51px;
  padding-right: 1px;
`;
const BinSpot = styled.div`
  position: absolute;
  left: 14px;
  top: 7px;
`;

const Link = () => (
  <g><path d="M1.5 36.5H13.5V48.5H1.5Z" fill="#f4f4f4" stroke="#9a9a9a" /><path d="M4 46.5Q3.5 42 7.5 41.5L5.5 39.5H11.5V45.5L9.7 43.6Q6.5 44 7 46.5Z" fill="#2b5fa8" /></g>
);

const shortcuts = [
  [[["Develop", 44]], (
    <g>
      <defs><linearGradient id="gold" x1="0" y1="0" x2="1" y2="1"><stop offset="0" stopColor="#fff0a0" /><stop offset=".4" stopColor="#ffc81e" /><stop offset=".6" stopColor="#ffe670" /><stop offset="1" stopColor="#f0a400" /></linearGradient></defs>
      <path d="M24.500 2Q26 2 26.500 4.500L29.500 15.500L43.500 15.500Q46.500 16.500 44 19L34 27L39 40.500Q39 43.500 36 42L25 34.500L14 42.500Q10.500 43.500 11 40L15.500 27L4 19Q2 16.500 4.500 15.500L19.500 16L22.500 4.500Q23 2 24.500 2Z" fill="url(#gold)" stroke="#b97a08" strokeWidth="1.2" />
      <path d="M24.500 4.500L28 17.500L42 17.500M25 32L13.500 40" stroke="#fff6c8" strokeWidth="1" opacity=".8" />
    </g>
  )],
  [[["Naver Cloud", 67]], (
    <g>
      <defs><linearGradient id="gr" x1="0" y1="0" x2="1" y2="1"><stop offset="0" stopColor="#06d01c" /><stop offset="1" stopColor="#35b54a" /></linearGradient></defs>
      <path d="M21.500 4L36 18.500H28Q29 36 44 42Q19 45 15.500 18.500H7Z" fill="url(#gr)" />
      <Link />
    </g>
  )],
  [[["Backup", 39]], (
    <g>
      <path d="M10 22L20 31M32 23L24 31" stroke="#8b3a12" strokeWidth="1.6" />
      <path d="M20 24H25V46H19Z" fill="#8a7a10" /><path d="M23.500 24H26L27 46H23Z" fill="#7a2c10" />
      <path d="M1 12Q2 5 9 4Q15 0 23 1Q32 -1 38 3Q47 6 48 10Q47 17 40 20Q35 25 27 23Q18 26 11 21Q1 19 1 12Z" fill="#0a8f14" />
      <path d="M5 8H10M12 4H18M8 13H14M17 9H24M28 5H34M22 15H30M34 12H42M13 18H19M30 19H38M26 10H31M37 7H41M20 20H25M38 16H43" stroke="#27d831" strokeWidth="2" strokeDasharray="2 1" />
      <path d="M4 9Q5 6 9 5M16 2H27M7 14H9M17 6H19" stroke="#d6ffb0" strokeWidth="1.3" strokeDasharray="2 1" />
    </g>
  )],
  [[["카카오톡", 48], ["받은 파일...", 60]], (
    <g>
      <path d="M9 5H34V40H9Z" fill="#e9bf56" /><path d="M18 8L40 11V44L31 42Z" fill="#3a4252" /><path d="M16 6L31 11V46L18 43Z" fill="#f5fafd" /><path d="M19 11L28.500 14V41L18 39" stroke="#3b86b5" strokeWidth="1.200" /><circle cx="22" cy="21" r="2.500" stroke="#2f87bf" strokeWidth="1.400" /><path d="M24.500 21H27M21 27H25V31M21 34H25" stroke="#2f87bf" strokeWidth="1.400" /><path d="M34 19V31" stroke="#818996" strokeDasharray="1 1.500" strokeWidth="2.500" /><path d="M9 5L18 9V45L9 39Z" fill="#fbe39a" />
      <Link />
    </g>
  )],
  [[["다운로드 -", 56], ["바로 가기", 51]], (
    <g><path d="M9 5H34V39H9Z" fill="#f0cc6a" /><path d="M9 5L18 12V45L9 39Z" fill="#fbe39a" /><path d="M30 18H39V30H46L34.500 42L23 30H30Z" fill="#3296e6" stroke="#1f7fcc" strokeWidth=".8" /><Link /></g>
  )],
  [[["정리 필요", 51]], (
    <g><path d="M9 5H34V38H9Z" fill="#e9bf56" /><path d="M20 8L37 10V41L26 44Z" fill="#f3cf70" /><path d="M28 14L34.500 13V44L27 45Z" fill="#f3f5f7" /><path d="M31 22V33" stroke="#2f87bf" strokeWidth="4" strokeDasharray="2 1" /><path d="M35 31H39.500V43L34 44Z" fill="#f6da80" /><path d="M14 6L27 12V45L17 42Z" fill="#f5d47c" /><path d="M9 5L18 11V46L9 39Z" fill="#fbe39a" /></g>
  )],
  [[["정리.xlsx", 47]], (
    <g><path d="M8.500 2.500H32L41.500 12V45.500H8.500Z" fill="#fafafa" stroke="#7d7d7d" /><path d="M32 2.500V12H41.500" fill="#e4e4e4" stroke="#7d7d7d" /><path d="M27 20.500H32M33.500 20.500H38M27 25H32M33.500 25H38M27 29.500H32M33.500 29.500H38" stroke="#1f8a52" strokeWidth="2.400" /><rect x="3" y="13" width="22" height="22" rx="1.500" fill="#107c41" /><path d="M9.500 18L18.500 30M18.500 18L9.500 30" stroke="#fff" strokeWidth="2.800" /></g>
  )],
];

const Bin = () => (
  <Svg w={48} h={48}>
    <path d="M6 9L42 10L38 40L27 45L10 41Z" fill="#d9dcde" /><path d="M27 13L42 10L38 40L27 45Z" fill="#b6babd" /><path d="M6 9L27 13L27 45L10 41Z" fill="#eef0f1" />
    <path d="M6 9L12 6L16 8L18 3L24 5L28 3L34 8L42 10L28 14Z" fill="#f3f4f5" stroke="#c8cbcd" strokeWidth=".7" />
    <path d="M30 20L35 27L30 34ZM36 15L39 20L35 27Z" fill="#9fa4a8" opacity=".6" />
    <path d="M12 23.500L14.500 20.500Q17 18.500 19 21.500" stroke="#1c84d4" strokeWidth="4" /><path d="M20 24.500Q23 28 20 31" stroke="#1c84d4" strokeWidth="4" /><path d="M17 32.500Q10.500 32 11.500 27" stroke="#1c84d4" strokeWidth="4" />
  </Svg>
);

/* ---------- monitor caption ---------- */

const Caption = styled.div`
  position: absolute;
  left: 1637px;
  top: 967px;
  color: #f2f2f2;
`;

/* ---------- taskbar ---------- */

const Taskbar = styled.footer`
  position: absolute;
  left: 0;
  top: 1040px;
  width: 1920px;
  height: 40px;
  display: flex;
  background: #1e1e1e;
  color: #f0f0f0;
`;
const TaskApp = styled.div`
  flex: none;
  width: 48px;
  height: 40px;
  margin-left: ${(p) => p.$g}px;
  display: flex;
  flex-direction: column;
  align-items: center;
  justify-content: space-between;
  background: ${(p) => p.$bg || "transparent"};
`;
const AppPic = styled.div`
  flex: 1;
  display: flex;
  align-items: center;
`;
const Under = styled.i`
  display: block;
  width: ${(p) => p.$w}px;
  height: 2px;
  background: ${(p) => p.$c || "#76b9ed"};
`;

const apps = [
  [0, <Svg w={16} h={16}><path d="M0 2.300L6.500 1.400V7.500H0ZM7.500 1.200L16 0V7.500H7.500ZM0 8.500H6.500V14.600L0 13.700ZM7.500 8.500H16V16L7.500 14.800Z" fill="#fff" /></Svg>],
  [0, <Svg w={17} h={17}><circle cx="10.500" cy="6.300" r="5.400" stroke="#fff" strokeWidth="1.400" /><path d="M6.700 10.300L.7 16.300" stroke="#fff" strokeWidth="1.400" /></Svg>],
  [40, <Svg w={22} h={18}><path d="M0 0H9L10.500 2H22V18H0Z" fill="#e8a92d" /><path d="M0 4H22V18H0Z" fill="#ffd766" /><path d="M4 18V12Q4 9.500 6.500 9.500H15.500Q18 9.500 18 12V18H14V14H8V18Z" fill="#3b8fd4" /></Svg>],
  [40, <Svg w={24} h={24}><rect width="24" height="24" fill="#fae100" /><ellipse cx="12" cy="11" rx="9.500" ry="7.500" fill="#371d1e" /><path d="M7 16L7 21.500L12 17Z" fill="#371d1e" /><text x="12" y="13.400" fontSize="6" fontWeight="800" textAnchor="middle" fill="#fae100">TALK</text></Svg>],
  [40, <Svg w={24} h={24}><path d="M2 5Q9 -1.500 17 1.500Q21 4 22 9L6 12Z" fill="#232c8e" /><path d="M1 10Q3 8 7 10.500Q11 14 16 10Q18 7 22 9Q24 14 21 19Q17 24 10 22.500Q1 20 1 10Z" fill="#19b9a6" /><path d="M10 22.500Q20 19 20 8.500L22 9Q24 14 21 19Q17 24 10 22.500Z" fill="#d8f5f2" /><path d="M6 10.500Q12 12 17 8Q12 15 6 10.500Z" fill="#f4fbfb" /></Svg>],
  [40, <Svg w={24} h={24}><rect x="2" y="1" width="17" height="22" fill="#f4f4ee" stroke="#9a9a9a" strokeWidth=".8" /><path d="M3 2.500H18" stroke="#7d7d7d" strokeDasharray="1 1" strokeWidth="1.500" /><path d="M2.500 14H18.500V22.500H2.500Z" fill="#8ed152" /><path d="M2.500 18H18.500V22.500H2.500Z" fill="#3f9a1d" /><path d="M6 7V13M8 7V13M10 10H12.500M13.500 10H16" stroke="#222" strokeWidth="1.200" /><path d="M13 16L20 3L23 1.500L22 5L15 17Z" fill="#e9a63a" stroke="#7d4a14" strokeWidth=".7" /></Svg>],
  [0, <Svg w={22} h={22}><circle cx="11" cy="11" r="11" fill="#fff" /><path d="M9 4Q13 3 14.500 5.500Q17.500 6 17.700 10Q17.700 14 16.300 17.500Q14 19.500 12.500 17.500Q12.500 15.500 15 15.800Q11.500 14.500 11 13Q9 14.500 7 13Q4.500 11 4.500 8H8.500Z" fill="#13ab2d" /><path d="M4.800 7L8 3.800V7Z" fill="#13ab2d" /></Svg>],
  [48, <Svg w={24} h={22}><rect x="6" width="18" height="22" rx="1.500" fill="#2b7cd3" /><path d="M6 0H24V6H6Z" fill="#41a5ee" /><path d="M6 11H24V16H6Z" fill="#185abd" /><path d="M6 16H24V22H6Z" fill="#103f91" /><rect y="5" width="13" height="13" rx="1.200" fill="#185abd" /><text x="6.500" y="15" fontSize="9.500" fontWeight="700" textAnchor="middle" fill="#fff">W</text></Svg>],
  [0, <Svg w={20} h={24}><circle cx="5" cy="4" r="3.500" fill="#dfe7ee" /><circle cx="15" cy="4" r="3.500" fill="#dfe7ee" /><circle cx="10" cy="7" r="6.500" fill="#eef3f7" /><circle cx="8" cy="4.500" r=".9" fill="#222" /><circle cx="12" cy="4.500" r=".9" fill="#222" /><path d="M2 17Q-1 14 2 11M18 17Q21 14 18 11" stroke="#7ab6e0" strokeWidth="2" /><circle cx="10" cy="13.500" r="7" fill="#fff" stroke="#5d9fd3" strokeWidth="1" /><path d="M7.500 9V15.500H14.500M5.500 11.500H12.500V18" stroke="#222" strokeWidth="1.300" /><path d="M3 21H7V24H1ZM13 21H17L19 24H13Z" fill="#f0b040" /></Svg>],
  [40, <Svg w={22} h={24}><circle cx="10" cy="14.500" r="6" stroke="#1ed45f" strokeWidth="5.200" /><circle cx="18" cy="3.500" r="3.200" fill="#1ed45f" /></Svg>],
  [0, <Svg w={22} h={22}><path d="M11 11L1.470 5.500A11 11 0 0 1 20.530 5.500Z" fill="#e94335" /><path d="M11 11L20.530 5.500A11 11 0 0 1 11 22Z" fill="#fbbc05" /><path d="M11 11L11 22A11 11 0 0 1 1.470 5.500Z" fill="#34a353" /><path d="M11 6H20.800L16 12L11 22L15.500 13.500Z" fill="#fbbc05" /><path d="M1.470 5.500L6.500 13.500L11 11L11 6Z" fill="#e94335" /><circle cx="11" cy="11" r="5.200" fill="#fff" /><circle cx="11" cy="11" r="4.200" fill="#4285f4" /></Svg>],
  [40, <Svg w={23} h={19}><rect x=".5" y=".5" width="22" height="18" fill="#000" stroke="#a8a8a8" /><path d="M1 1H22V3H1Z" fill="#c9d3dd" /><text x="2.500" y="10" fontSize="6" fontWeight="700" fill="#fff">C:\</text><path d="M14 9H19" stroke="#fff" /></Svg>],
  [40, <Svg w={24} h={22}><rect x="6" width="18" height="22" rx="1.500" fill="#21a366" /><path d="M6 0H15V7H6Z" fill="#107c41" /><path d="M15 0H24V7H15Z" fill="#33c481" /><path d="M6 12H15V22H6Z" fill="#185c37" /><path d="M15 14H24V22H15Z" fill="#107c41" /><rect y="5" width="13" height="13" rx="1.200" fill="#107c41" /><path d="M4 8L9 15M9 8L4 15" stroke="#fff" strokeWidth="1.700" /></Svg>],
  [48, <RunIcon w={23} h={16} />],
];

function TaskApps() {
  return apps.map(([w, pic], k) => {
    const word = k === 7;
    const run = k === apps.length - 1;
    const gap = k < 2 ? 0 : k === 2 ? 3 : 1;
    const bg = word ? "linear-gradient(90deg, #82573b 44px, #6d4027 44px, #6d4027 45px, #7c5036 45px)" : run ? "#4e4e4e" : undefined;
    return (
      <TaskApp key={k} $g={gap} $bg={bg}>
        <AppPic>{pic}</AppPic>
        {w ? <Under $w={w} $c={word ? "#f37a14" : undefined} /> : null}
      </TaskApp>
    );
  });
}

const Clock = styled.div`
  display: flex;
  flex-direction: column;
  align-items: center;
  width: 100%;
  gap: 2px;
`;
const DesktopEdge = styled.i`
  display: block;
  width: 1px;
  height: 40px;
  background: #6f6f6f;
`;

function Tray() {
  return (
    <Strip from={686} h={40} items={[
      [1651, 1663, <Svg w={12} h={7}><path d="M.6 6.200L6 .9L11.400 6.200" stroke="#fff" strokeWidth="1.300" /></Svg>],
      [1673, 1689, <Svg w={16} h={16}><rect width="16" height="16" fill="#1e8fe8" /><path d="M4 11Q2 8 5 7Q7 2 10.500 5Q14 6 14 9.500Q14 12 11 12H5Z" fill="#fff" /><circle cx="10.500" cy="9.500" r="2" fill="#1e8fe8" /><circle cx="4" cy="12" r="4" fill="#1fae57" /><path d="M2 12L3.600 13.600L6.300 10.500" stroke="#fff" strokeWidth="1.200" /></Svg>],
      [1697, 1713, <Svg w={16} h={12}><rect x="4.500" y="3.500" width="10" height="7" stroke="#fff" /><path d="M6 5H13V9H6Z" fill="#fff" /><path d="M15.500 5.500V8.500" stroke="#fff" /><path d="M0 3H5V5Q5 7 2.500 7Q0 7 0 5ZM1.500 0V3M3.500 0V3M2.500 7V10.500H5" fill="#1e1e1e" stroke="#fff" /></Svg>],
      [1721, 1737, <Svg w={16} h={13}><path d="M6 1.500H15.500V9.500H4.500V6M10 9.500V12.500M6.500 12.500H13.500M.5 .5H4.500V4.500H.5ZM2.500 4.500V12" stroke="#fff" /></Svg>],
      [1745, 1761, <Svg w={16} h={13}><path d="M.5 4.500H3L6.500 1V12L3 8.500H.5Z" stroke="#fff" /><path d="M8.500 4.500Q10 6.500 8.500 8.500" stroke="#fff" /><path d="M10.500 3Q13 6.500 10.500 10" stroke="#aaa" /><path d="M12.800 1.200Q16.500 6.500 12.800 11.800" stroke="#666" /></Svg>],
      [1769, 1783, <T w={13} s={19} lh={24} c="#fff">A</T>],
      [1793, 1861, <Clock><T w={51} s={12.5} lh={17}>오후 8:18</T><T w={66} s={12.5} lh={17}>2020-11-13</T></Clock>],
      [1879, 1904, <Svg w={25} h={24}><path d="M0 2H16V15H9L5 18.500V15H0Z" fill="#fff" /><path d="M2.500 5.500H13.500M2.500 8.500H13.500M2.500 11.500H8" stroke="#1e1e1e" /><circle cx="15.500" cy="16" r="7.500" fill="#3a3a3a" stroke="#8a8a8a" /><text x="15.500" y="20" fontSize="11" fontWeight="600" textAnchor="middle" fill="#fff">6</text></Svg>, 4],
      [1915, 1916, <DesktopEdge />],
    ]} />
  );
}

export default function App() {
  return (
    <Desktop>
      <Global />
      <BinSpot><Bin /></BinSpot>
      <IconColumn>
        {shortcuts.map(([labels, art], k) => (
          <Shortcut key={k}>
            <Pic><Svg w={48} h={48}>{art}</Svg></Pic>
            {labels.map(([t, w]) => <T key={t} w={w} s={12.5}>{t}</T>)}
          </Shortcut>
        ))}
      </IconColumn>
      <Caption>
        <Strip from={1637} h={18} items={[
          [1638, 1700, <T w={62}>Transaction</T>],
          [1710, 1895, <T w={185} b={700}>Make SensorCode Dir And Copy</T>],
        ]} />
        <Strip from={1637} h={18} mt={12} items={[
          [1648, 1700, <T w={52}>Event (St)</T>],
          [1710, 1858, <T w={148} b={700}>SensorCode 디렉토리 생성</T>],
        ]} />
      </Caption>
      <WordWindow x={-192} y={60} />
      <Sliver $x={-123} $y={129}>
        <Svg w={11} h={11}><path d="M.5 .5L10.5 10.5M10.5 .5L.5 10.5" stroke="#b4b4b4" strokeWidth="1.1" /></Svg>
      </Sliver>
      <WordWindow x={-146} y={106} active />
      <WordWindow x={-100} y={152} front />
      <RunDialog />
      <Taskbar>
        <TaskApps />
        <Tray />
      </Taskbar>
    </Desktop>
  );
}
